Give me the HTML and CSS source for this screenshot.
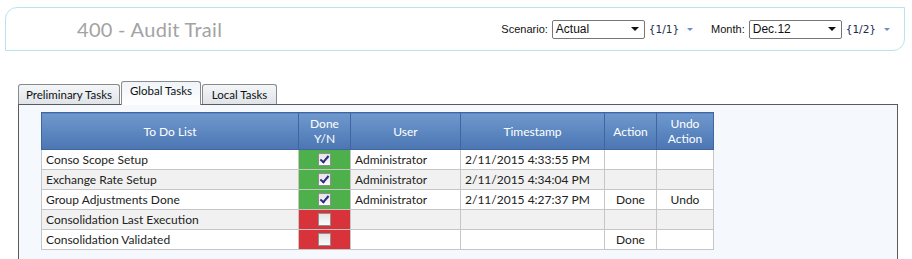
FILE: index.html
```html
<!DOCTYPE html>
<html lang="en">
<head>
    <meta charset="UTF-8">
    <title>400 - Audit Trail</title>
    <link rel="stylesheet" href="styles.css">
</head>
<body>
    <div class="header">
        <h1>400 - Audit Trail</h1>
        <div class="filters">
            <label>Scenario:</label>
            <div class="select"><span>Actual</span><i></i></div>
            <span class="count">{1/1}</span>
            <span class="more"></span>
            <label class="month">Month:</label>
            <div class="select"><span>Dec.12</span><i></i></div>
            <span class="count">{1/2}</span>
            <span class="more"></span>
        </div>
    </div>

    <div class="tabs">
        <div class="tab prelim">Preliminary Tasks</div>
        <div class="tab active">Global Tasks</div>
        <div class="tab local">Local Tasks</div>
    </div>

    <div class="panel">
        <table class="grid">
            <colgroup>
                <col style="width:257px">
                <col style="width:52px">
                <col style="width:110px">
                <col style="width:144px">
                <col style="width:52px">
                <col style="width:57px">
            </colgroup>
            <thead>
                <tr>
                    <th>To Do List</th>
                    <th>Done<br>Y/N</th>
                    <th>User</th>
                    <th>Timestamp</th>
                    <th>Action</th>
                    <th>Undo<br>Action</th>
                </tr>
            </thead>
            <tbody>
                <tr>
                    <td>Conso Scope Setup</td>
                    <td class="done yes"><span class="box checked"></span></td>
                    <td>Administrator</td>
                    <td>2/11/2015 4:33:55 PM</td>
                    <td></td>
                    <td></td>
                </tr>
                <tr>
                    <td>Exchange Rate Setup</td>
                    <td class="done yes"><span class="box checked"></span></td>
                    <td>Administrator</td>
                    <td>2/11/2015 4:34:04 PM</td>
                    <td></td>
                    <td></td>
                </tr>
                <tr>
                    <td>Group Adjustments Done</td>
                    <td class="done yes"><span class="box checked"></span></td>
                    <td>Administrator</td>
                    <td>2/11/2015 4:27:37 PM</td>
                    <td class="center">Done</td>
                    <td class="center">Undo</td>
                </tr>
                <tr>
                    <td>Consolidation Last Execution</td>
                    <td class="done no"><span class="box"></span></td>
                    <td></td>
                    <td></td>
                    <td></td>
                    <td></td>
                </tr>
                <tr>
                    <td>Consolidation Validated</td>
                    <td class="done no"><span class="box"></span></td>
                    <td></td>
                    <td></td>
                    <td class="center">Done</td>
                    <td></td>
                </tr>
            </tbody>
        </table>
    </div>
</body>
</html>
```

FILE: styles.css
```css
body {
    margin: 0;
    background: white;
    font-family: 'Lato', sans-serif;
    color: #222;
}
.header {
    display: flex;
    align-items: center;
    justify-content: space-between;
    margin: 7px 7px 0 5px;
    height: 42px;
    border: 1px solid #b9e3f1;
    border-radius: 12px 0 12px 0;
}
h1 {
    margin: 0 0 0 71px;
    font-family: 'Lato', sans-serif;
    font-weight: normal;
    font-size: 20px;
    color: #a3a3a3;
    letter-spacing: 0.3px;
}
.filters {
    display: flex;
    align-items: center;
    margin-right: 14px;
    font-family: 'Liberation Sans', sans-serif;
    font-size: 11px;
    color: #111;
}
.filters label {
    margin-right: 4px;
}
.filters .month {
    margin-left: 18px;
}
.select {
    display: flex;
    align-items: center;
    justify-content: space-between;
    box-sizing: border-box;
    width: 93px;
    height: 19px;
    padding: 0 5px 0 3px;
    border: 1px solid #777;
    border-radius: 2px;
    background: white;
    font-size: 12px;
}
.select i {
    width: 0;
    height: 0;
    border-left: 4px solid transparent;
    border-right: 4px solid transparent;
    border-top: 4px solid #111;
}
.count {
    margin-left: 4px;
    font-family: 'DejaVu Sans', sans-serif;
    font-size: 10.5px;
    color: #1a2a4a;
}
.more {
    width: 0;
    height: 0;
    margin: 0 0 0 8px;
    border-left: 3px solid transparent;
    border-right: 3px solid transparent;
    border-top: 3px solid #6b8fbf;
}
.tabs {
    display: flex;
    align-items: flex-end;
    margin: 30px 0 0 18px;
    height: 23px;
    position: relative;
    z-index: 1;
}
.tab {
    box-sizing: border-box;
    height: 20px;
    margin-right: 1px;
    padding-top: 3px;
    border: 1px solid #8a8a8a;
    border-bottom: none;
    border-radius: 3px 3px 0 0;
    background: linear-gradient(#f4f6f8, #dfe4e9);
    font-size: 11.5px;
    color: #111;
    text-align: center;
    white-space: nowrap;
}
.tab.prelim {
    width: 102px;
}
.tab.active {
    width: 80px;
    height: 24px;
    margin-bottom: -1px;
    padding-top: 2px;
    background: linear-gradient(#eef4f9, #ffffff);
}
.tab.local {
    width: 75px;
}
.panel {
    margin: 0 14px 0 18px;
    height: 160px;
    padding: 7px 22px;
    border: 1px solid #5a5a5a;
    border-bottom: none;
    background: #f5f9fd;
}
.grid {
    border-collapse: collapse;
    table-layout: fixed;
    width: 672px;
    font-size: 12px;
}
.grid th {
    height: 36px;
    padding: 0;
    border: 1px solid #3f66a3;
    background: linear-gradient(#6f98cd, #4b76b3);
    color: white;
    font-weight: normal;
    line-height: 15px;
}
.grid td {
    height: 19px;
    padding: 0 4px;
    border: 1px solid #c6c6c6;
    background: white;
    white-space: nowrap;
}
.grid tbody tr:nth-child(even) td {
    background: #f1f1f1;
}
.grid td.center {
    text-align: center;
}
.grid td.done {
    text-align: center;
    padding: 0;
    line-height: 0;
}
.grid tbody tr td.yes {
    background: #4db04b;
}
.grid tbody tr td.no {
    background: #d8333a;
}
.box {
    display: inline-block;
    box-sizing: border-box;
    width: 13px;
    height: 13px;
    border: 1px solid #8f8f8f;
    background: linear-gradient(#e4e4e4, #fbfbfb);
    position: relative;
}
.box.checked::after {
    content: "";
    position: absolute;
    left: 3px;
    top: 0px;
    width: 3px;
    height: 7px;
    border: solid #2c2c86;
    border-width: 0 2px 2px 0;
    transform: rotate(40deg);
}
```
